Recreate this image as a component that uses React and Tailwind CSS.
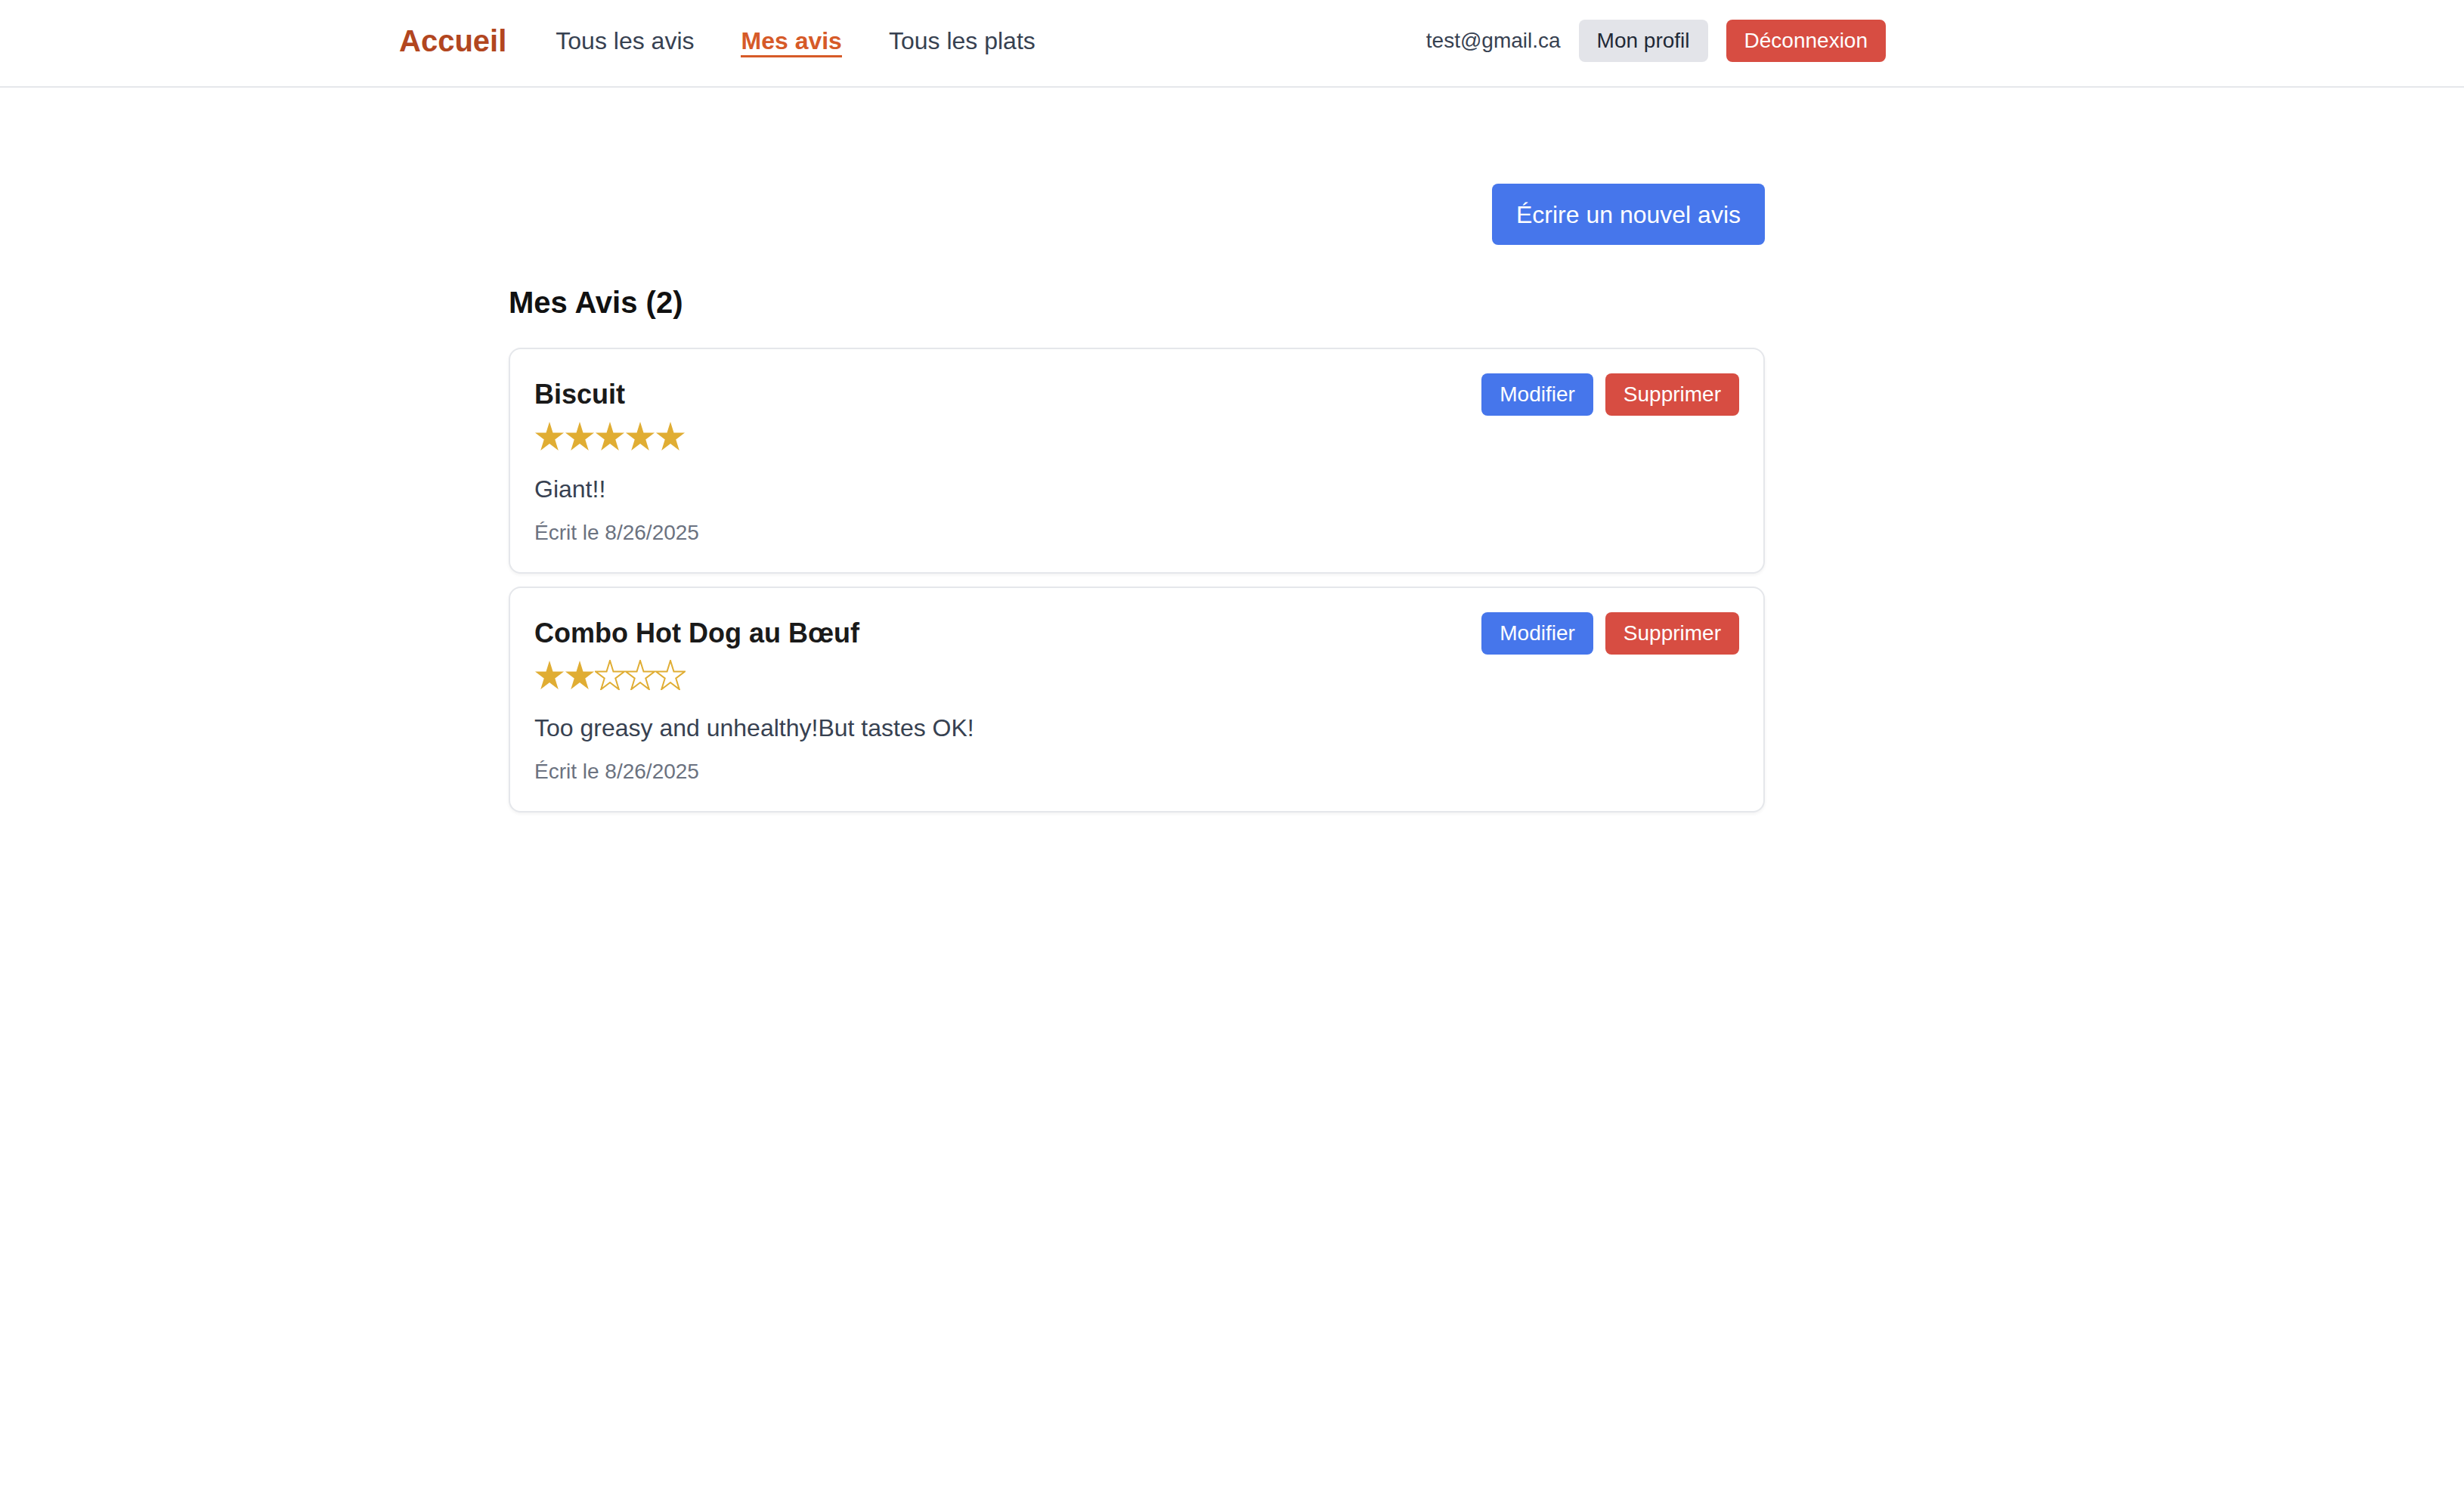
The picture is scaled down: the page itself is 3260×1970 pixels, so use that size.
import React from "react";

function Star({ filled }) {
  return (
    <svg width="40" height="40" viewBox="-1 -1 40 40" className="block">
      <polygon
        points="19,0 23.49,14.51 38.02,14.51 26.27,23.48 30.76,37.99 19,29.02 7.24,37.99 11.73,23.48 -0.02,14.51 14.51,14.51"
        fill={filled ? "#e0ad33" : "#ffffff"}
        stroke="#e0ad33"
        strokeWidth={filled ? 0 : 2}
        strokeLinejoin="miter"
      />
    </svg>
  );
}

function ReviewCard({ title, rating, text, date }) {
  return (
    <div className="rounded-[16px] border-2 border-[#e5e7eb] bg-white p-[32px] shadow-[0_2px_4px_rgba(0,0,0,0.05)]">
      <div className="flex items-start justify-between">
        <div>
          <h3 className="text-[36px] font-bold leading-[56px] text-[#1a1a1a]">{title}</h3>
          <div className="mb-[26px] mt-[7px] flex">
            {[1, 2, 3, 4, 5].map((i) => (
              <Star key={i} filled={i <= rating} />
            ))}
          </div>
        </div>
        <div className="flex gap-[16px]">
          <button className="h-[56px] rounded-[8px] bg-[#4676eb] px-[24px] text-[28px] leading-[40px] text-white">
            Modifier
          </button>
          <button className="h-[56px] rounded-[8px] bg-[#d74d42] px-[24px] text-[28px] leading-[40px] text-white">
            Supprimer
          </button>
        </div>
      </div>
      <p className="text-[32px] leading-[48px] text-[#374151]">{text}</p>
      <p className="mt-[14px] text-[28px] leading-[40px] text-[#6b7280]">{date}</p>
    </div>
  );
}

export default function App() {
  return (
    <div className="min-h-screen bg-white font-['Liberation_Sans',Arial,sans-serif]">
      <header className="h-[116px] border-b-2 border-[#e5e7eb] bg-white">
        <div className="ml-[528px] flex h-full w-[1967px] items-center justify-between pb-[6px]">
          <nav className="flex items-center gap-[62px]">
            <a className="mr-[3px] text-[40px] font-bold leading-[56px] text-[#b2461f]">Accueil</a>
            <a className="text-[32px] leading-[48px] text-[#374151]">Tous les avis</a>
            <a className="border-b-[3px] border-[#d65a28] pt-[3px] text-[32px] font-bold leading-[38px] text-[#d65a28]">
              Mes avis
            </a>
            <a className="text-[32px] leading-[48px] text-[#374151]">Tous les plats</a>
          </nav>
          <div className="flex items-center gap-[24px]">
            <span className="text-[28px] leading-[40px] text-[#374151]">test@gmail.ca</span>
            <button className="h-[56px] rounded-[8px] bg-[#e3e4e9] px-[24px] text-[28px] leading-[40px] text-[#1f2937]">
              Mon profil
            </button>
            <button className="h-[56px] rounded-[8px] bg-[#d74d42] px-[24px] text-[28px] leading-[40px] text-white">
              Déconnexion
            </button>
          </div>
        </div>
      </header>

      <main className="ml-[673px] w-[1662px] pt-[127px]">
        <div className="flex justify-end">
          <button className="h-[81px] rounded-[8px] bg-[#4676eb] px-[32px] text-[32px] leading-[48px] text-white">
            Écrire un nouvel avis
          </button>
        </div>
        <h2 className="mb-[32px] mt-[48px] text-[40px] font-bold leading-[56px] text-[#111111]">Mes Avis (2)</h2>
        <div className="flex flex-col gap-[17px]">
          <ReviewCard title="Biscuit" rating={5} text="Giant!!" date="Écrit le 8/26/2025" />
          <ReviewCard
            title="Combo Hot Dog au Bœuf"
            rating={2}
            text="Too greasy and unhealthy!But tastes OK!"
            date="Écrit le 8/26/2025"
          />
        </div>
      </main>
    </div>
  );
}
